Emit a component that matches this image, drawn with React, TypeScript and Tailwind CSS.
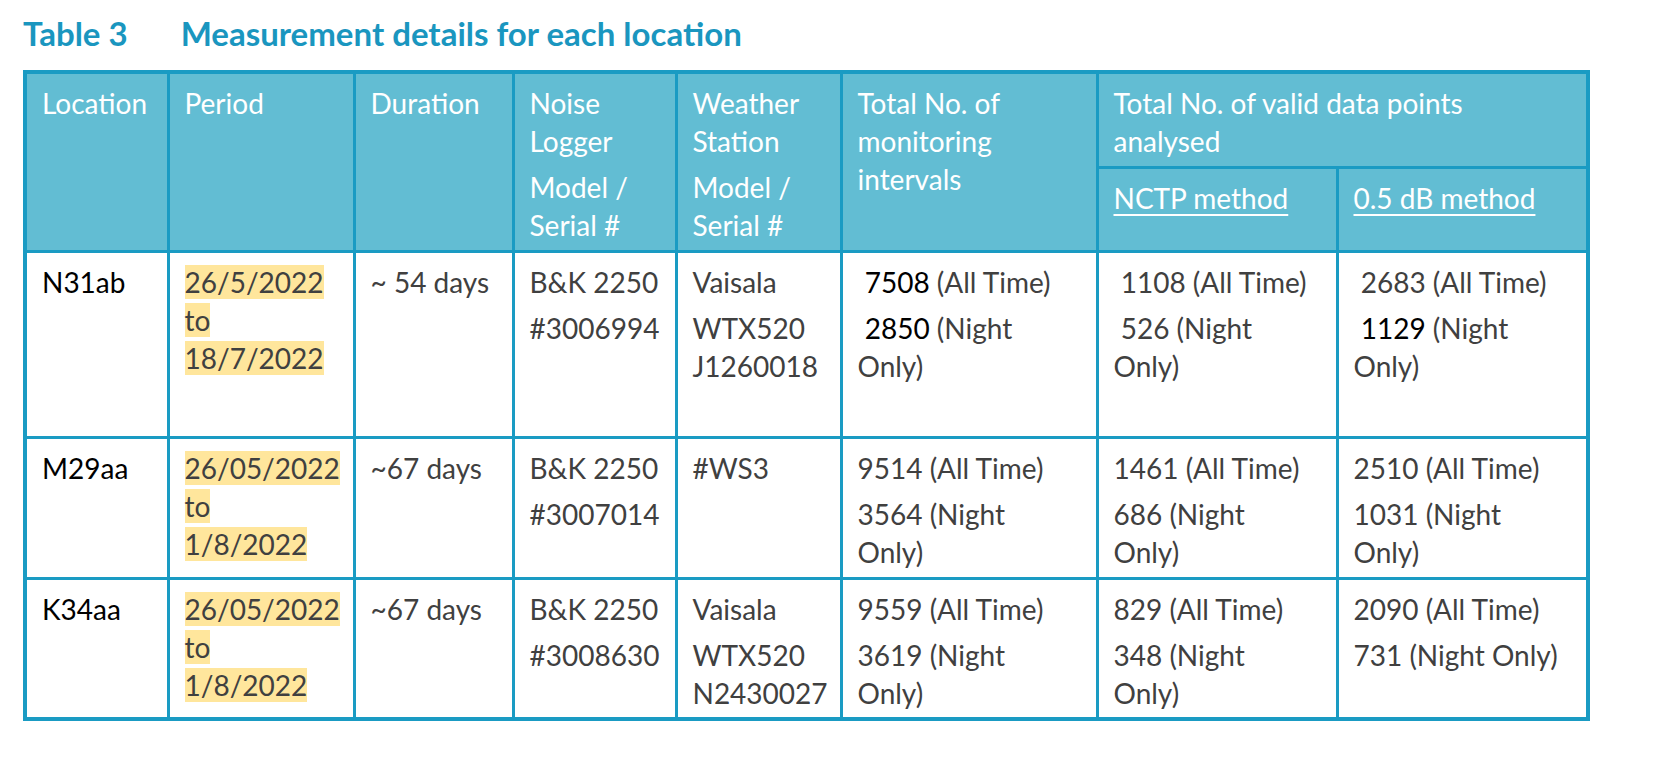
import React from "react";

const hl = "bg-[#ffe69c]";

function P({ children, className = "" }: { children: React.ReactNode; className?: string }) {
  return <div className={"mb-[8px] last:mb-0 " + className}>{children}</div>;
}

export default function App() {
  const th = "border-[3px] border-[#1a9bc3] bg-[#62bdd3] text-white font-normal text-left align-top pl-[15px] pr-[6px] pt-[10px]";
  const td = "border-[3px] border-[#1a9bc3] align-top pl-[15px] pr-[6px] pt-[10px] text-[#404040]";
  return (
    <div className="w-[1653px] h-[765px] bg-white overflow-hidden font-['Lato',sans-serif] text-[28px] leading-[38px]">
      <div className="pl-[23px] pt-[12px] h-[70px] flex gap-[53px] text-[#1a96bf] font-bold text-[33px] leading-[42px]">
        <span>Table 3</span>
        <span>Measurement details for each location</span>
      </div>
      <table className="ml-[23px] table-fixed border-collapse w-[1563px] border-[4px] border-[#1a9bc3]">
        <colgroup>
          <col className="w-[143px]" />
          <col className="w-[186px]" />
          <col className="w-[159px]" />
          <col className="w-[163px]" />
          <col className="w-[165px]" />
          <col className="w-[256px]" />
          <col className="w-[240px]" />
          <col className="w-[251px]" />
        </colgroup>
        <thead>
          <tr className="h-[95px]">
            <th rowSpan={2} className={th}>Location</th>
            <th rowSpan={2} className={th}>Period</th>
            <th rowSpan={2} className={th}>Duration</th>
            <th rowSpan={2} className={th}>
              <P>Noise<br />Logger</P>
              <P>Model /<br />Serial #</P>
            </th>
            <th rowSpan={2} className={th}>
              <P>Weather<br />Station</P>
              <P>Model /<br />Serial #</P>
            </th>
            <th rowSpan={2} className={th}>Total No. of<br />monitoring<br />intervals</th>
            <th colSpan={2} className={th}>Total No. of valid data points<br />analysed</th>
          </tr>
          <tr className="h-[84px]">
            <th className={th + " font-bold"}><span className="underline underline-offset-[5px] decoration-2">NCTP method</span></th>
            <th className={th + " font-bold"}><span className="underline underline-offset-[5px] decoration-2">0.5 dB method</span></th>
          </tr>
        </thead>
        <tbody>
          <tr className="h-[186px]">
            <td className={td + " text-black"}>N31ab</td>
            <td className={td}>
              <span className={hl}>26/5/2022</span><br />
              <span className={hl}>to</span><br />
              <span className={hl}>18/7/2022</span>
            </td>
            <td className={td}>~ 54 days</td>
            <td className={td}>
              <P>B&amp;K 2250</P>
              <P>#3006994</P>
            </td>
            <td className={td}>
              <P>Vaisala</P>
              <P>WTX520<br />J1260018</P>
            </td>
            <td className={td}>
              <P>&nbsp;<span className="text-black">7508</span> (All Time)</P>
              <P>&nbsp;<span className="text-black">2850</span> (Night<br />Only)</P>
            </td>
            <td className={td}>
              <P>&nbsp;1108 (All Time)</P>
              <P>&nbsp;526 (Night<br />Only)</P>
            </td>
            <td className={td}>
              <P>&nbsp;2683 (All Time)</P>
              <P>&nbsp;<span className="text-black">1129</span> (Night<br />Only)</P>
            </td>
          </tr>
          <tr className="h-[141px]">
            <td className={td + " text-black"}>M29aa</td>
            <td className={td}>
              <span className={hl}>26/05/2022</span><br />
              <span className={hl}>to</span><br />
              <span className={hl}>1/8/2022</span>
            </td>
            <td className={td}>~67 days</td>
            <td className={td}>
              <P>B&amp;K 2250</P>
              <P>#3007014</P>
            </td>
            <td className={td}>#WS3</td>
            <td className={td}>
              <P>9514 (All Time)</P>
              <P>3564 (Night<br />Only)</P>
            </td>
            <td className={td}>
              <P>1461 (All Time)</P>
              <P>686 (Night<br />Only)</P>
            </td>
            <td className={td}>
              <P>2510 (All Time)</P>
              <P>1031 (Night<br />Only)</P>
            </td>
          </tr>
          <tr className="h-[141px]">
            <td className={td + " text-black"}>K34aa</td>
            <td className={td}>
              <span className={hl}>26/05/2022</span><br />
              <span className={hl}>to</span><br />
              <span className={hl}>1/8/2022</span>
            </td>
            <td className={td}>~67 days</td>
            <td className={td}>
              <P>B&amp;K 2250</P>
              <P>#3008630</P>
            </td>
            <td className={td}>
              <P>Vaisala</P>
              <P>WTX520<br />N2430027</P>
            </td>
            <td className={td}>
              <P>9559 (All Time)</P>
              <P>3619 (Night<br />Only)</P>
            </td>
            <td className={td}>
              <P>829 (All Time)</P>
              <P>348 (Night<br />Only)</P>
            </td>
            <td className={td}>
              <P>2090 (All Time)</P>
              <P>731 (Night Only)</P>
            </td>
          </tr>
        </tbody>
      </table>
    </div>
  );
}
